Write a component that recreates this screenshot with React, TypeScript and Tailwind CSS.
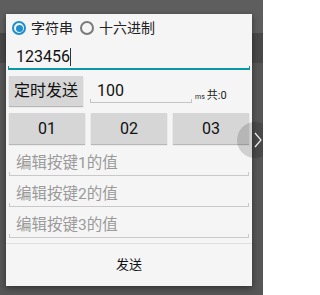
import React from "react";

const font = { fontFamily: "Roboto, 'Noto Sans CJK SC', sans-serif" };

function Underline({ color, thick }: { color: string; thick?: boolean }) {
  return (
    <div
      className={`h-[4px] border-x border-b ${thick ? "border-b-2" : ""}`}
      style={{ borderColor: color }}
    />
  );
}

function HintField({ label }: { label: string }) {
  return (
    <div className="mx-[3px] h-[31px] flex flex-col justify-end">
      <div className="pl-[7px] text-[15.5px] leading-[18px] text-[#9a9a9a]">{label}</div>
      <Underline color="#c9c9c9" />
    </div>
  );
}

export default function App() {
  return (
    <div className="relative w-[263px] h-[295px] overflow-hidden bg-[#565656]" style={font}>
      <div className="h-[33px] bg-[#5e5e5e]" />
      <div className="h-[30px] bg-[#484848]" />
      <div className="absolute left-[6px] top-[14px] w-[246px] h-[272px] bg-[#f5f5f5] shadow-[0_2px_6px_rgba(0,0,0,0.45)] flex flex-col">
        {/* radio row */}
        <div className="h-[28px] flex items-center text-[14px] text-[#222]">
          <div className="ml-[6px] w-[14px] h-[14px] rounded-full border-2 border-[#1e8fcc] flex items-center justify-center">
            <div className="w-[7px] h-[7px] rounded-full bg-[#1e8fcc]" />
          </div>
          <span className="ml-[5px]">字符串</span>
          <div className="ml-[7px] w-[14px] h-[14px] rounded-full border-2 border-[#7a7a7a]" />
          <span className="ml-[5px]">十六进制</span>
        </div>
        {/* input 1 */}
        <div className="mx-[2px] h-[28px] flex flex-col justify-end">
          <div className="pl-[8px] text-[16px] leading-[16px] text-[#111] flex items-center">
            123456
            <span className="inline-block w-[1px] h-[18px] bg-[#333]" />
          </div>
          <Underline color="#0a97a5" thick />
        </div>
        {/* timed send row */}
        <div className="mt-[6px] h-[30px] flex items-start">
          <div className="ml-[3px] w-[74px] h-[30px] bg-[#d6d6d6] shadow-[0_1px_1px_rgba(0,0,0,0.25)] flex items-center justify-center text-[16px] text-[#111]">
            定时发送
          </div>
          <div className="ml-[7px] w-[102px] h-[27px] flex flex-col justify-end">
            <div className="pl-[7px] text-[16px] leading-[16px] text-[#111]">100</div>
            <Underline color="#c4c4c4" />
          </div>
          <div className="ml-[3px] mt-[12px] flex items-baseline text-[#222]">
            <span className="text-[7px]">ms</span>
            <span className="ml-[2px] text-[11px]">共:0</span>
          </div>
        </div>
        {/* key buttons */}
        <div className="mt-[7px] flex ml-[3px] gap-[6px]">
          {["01", "02", "03"].map((k) => (
            <div
              key={k}
              className="w-[76px] h-[31px] bg-[#d6d6d6] shadow-[0_1px_1px_rgba(0,0,0,0.25)] flex items-center justify-center text-[16px] text-[#111]"
            >
              {k}
            </div>
          ))}
        </div>
        <div className="mt-[1px]">
          <HintField label="编辑按键1的值" />
          <HintField label="编辑按键2的值" />
          <HintField label="编辑按键3的值" />
        </div>
        <div className="mt-[5px] h-[1px] bg-[#e0e0e0]" />
        <div className="flex-1 flex items-center justify-center text-[13px] text-[#111]">发送</div>
      </div>
      {/* floating edge handle */}
      <div className="absolute left-[237px] top-[122px] w-[36px] h-[36px] rounded-full bg-black/15 flex items-center justify-start">
        <svg width="10" height="16" viewBox="0 0 10 16" className="ml-[16px]">
          <path d="M2 1 L8 8 L2 15" fill="none" stroke="#f0f0f0" strokeWidth="1.2" />
        </svg>
      </div>
    </div>
  );
}
